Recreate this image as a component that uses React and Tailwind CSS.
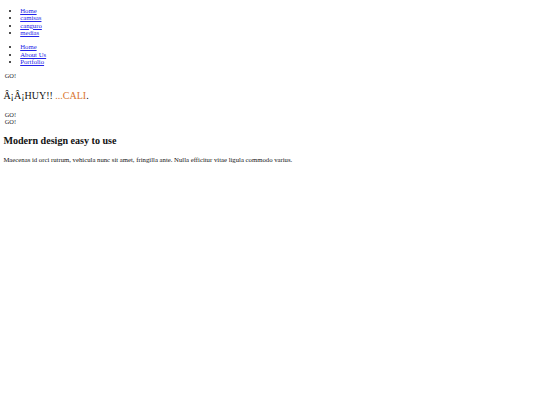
import React from 'react';

const menu = ['Home', 'camisas', 'canguro', 'medias'];
const nav = ['Home', 'About Us', 'Portfolio'];

const LinkList = ({ items }) => (
  <ul className="my-[6.7px] list-disc pl-[16.8px]">
    {items.map((item) => (
      <li key={item} className="leading-[7.5px]">
        <a href="#" className="text-[#2323e8] underline">{item}</a>
      </li>
    ))}
  </ul>
);

const Go = () => <div className="pl-[1.3px] text-[6.4px] leading-[6.7px] text-[#222]">GO!</div>;

export default function App() {
  return (
    <div className="min-h-[405px] bg-white px-[3.4px] text-[6.72px] text-[#111]" style={{ fontFamily: '"Liberation Serif", "Times New Roman", serif' }}>
      <LinkList items={menu} />
      <LinkList items={nav} />
      <Go />
      <h2 className="mt-[10.8px] mb-[10.4px] text-[10px] leading-[11.5px] font-normal">
        Â¡Â¡HUY!! <span className="text-[#d9752f]">...CALI</span>.
      </h2>
      <Go />
      <Go />
      <h2 className="mt-[9.4px] mb-[9.6px] text-[10.08px] leading-[11.6px] font-bold">Modern design easy to use</h2>
      <p className="leading-[7.5px]">
        Maecenas id orci rutrum, vehicula nunc sit amet, fringilla ante. Nulla efficitur vitae ligula commodo varius.
      </p>
    </div>
  );
}
